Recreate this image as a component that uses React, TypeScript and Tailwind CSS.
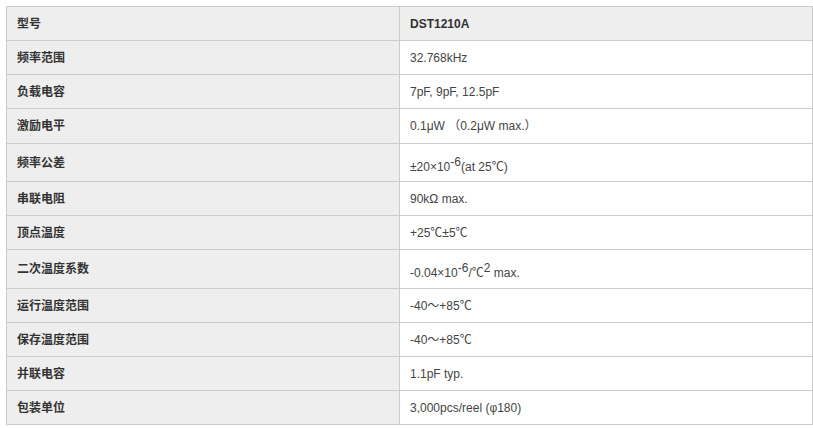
import React from "react"

type Row = { label: string; value: React.ReactNode; h: string; pad?: string }

const Sup = ({ children }: { children: React.ReactNode }) => (
  <sup className="relative top-0 align-super text-[12px] leading-none">{children}</sup>
)

const rows: Row[] = [
  { label: "频率范围", value: "32.768kHz", h: "h-[34px]" },
  { label: "负载电容", value: "7pF, 9pF, 12.5pF", h: "h-[34px]" },
  { label: "激励电平", value: "0.1μW （0.2μW max.）", h: "h-[35px]" },
  {
    label: "频率公差",
    h: "h-[38px]",
    pad: "pt-[6px]",
    value: (
      <>
        ±20×10<Sup>-6</Sup>(at 25℃)
      </>
    ),
  },
  { label: "串联电阻", value: "90kΩ max.", h: "h-[34px]" },
  { label: "顶点温度", value: "+25℃±5℃", h: "h-[34px]" },
  {
    label: "二次温度系数",
    h: "h-[39px]",
    pad: "pt-[6px]",
    value: (
      <>
        -0.04×10<Sup>-6</Sup>/℃<Sup>2</Sup> max.
      </>
    ),
  },
  { label: "运行温度范围", value: "-40～+85℃", h: "h-[34px]" },
  { label: "保存温度范围", value: "-40～+85℃", h: "h-[34px]" },
  { label: "并联电容", value: "1.1pF typ.", h: "h-[34px]" },
  { label: "包装单位", value: "3,000pcs/reel (φ180)", h: "h-[34px]" },
]

export default function App() {
  return (
    <div className="w-[813px] h-[428px] bg-white pt-[6px] pl-[6px] font-['Liberation_Sans','Noto_Sans_CJK_SC',sans-serif] text-[12px] text-[#333]">
      <table className="w-[807px] border-collapse">
        <tbody>
          <tr className="bg-[#eeeeee]">
            <td className="w-[393px] h-[34px] border border-[#cccccc] px-[10px] font-bold">型号</td>
            <td className="h-[34px] border border-[#cccccc] px-[10px] font-bold">DST1210A</td>
          </tr>
          {rows.map((r) => (
            <tr key={r.label}>
              <td className={`${r.h} border border-[#cccccc] bg-[#eeeeee] px-[10px] font-bold`}>
                {r.label}
              </td>
              <td className={`${r.h} ${r.pad ?? ""} border border-[#cccccc] bg-white px-[10px] text-[#444]`}>
                {r.value}
              </td>
            </tr>
          ))}
        </tbody>
      </table>
    </div>
  )
}
